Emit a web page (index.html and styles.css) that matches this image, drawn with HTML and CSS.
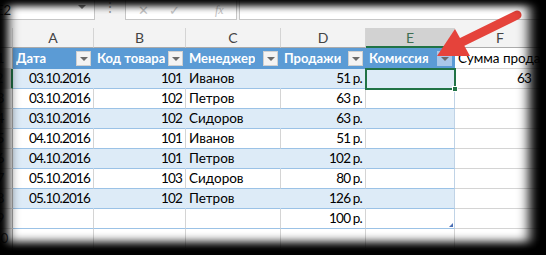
FILE: index.html
```html
<!DOCTYPE html>
<html lang="ru">
<head>
<meta charset="utf-8">
<title>Excel</title>
<link rel="stylesheet" href="styles.css">
</head>
<body>
<div class="app">
  <div class="fbar">
    <div class="namebox"><span class="nb-text">E2</span><span class="nb-arrow"></span></div>
    <div class="fb-dots">⋮</div>
    <div class="fb-buttons">
      <span class="fb-icon fb-x">✕</span>
      <span class="fb-icon fb-check">✓</span>
      <span class="fb-icon fb-fx">fx</span>
    </div>
    <div class="fb-input"></div>
  </div>
  <div class="strip"></div>
  <div class="sheet">
    <div class="row colhdr">
      <div class="cell rh"></div>
      <div class="cell ch">A</div>
      <div class="cell ch">B</div>
      <div class="cell ch">C</div>
      <div class="cell ch">D</div>
      <div class="cell ch ch-sel">E</div>
      <div class="cell ch">F</div>
    </div>
    <div class="row thead">
      <div class="cell rh"><span class="rn">1</span></div>
      <div class="cell th"><span class="th-text">Дата</span><span class="flt"></span></div>
      <div class="cell th"><span class="th-text">Код товара</span><span class="flt"></span></div>
      <div class="cell th"><span class="th-text">Менеджер</span><span class="flt"></span></div>
      <div class="cell th"><span class="th-text">Продажи</span><span class="flt"></span></div>
      <div class="cell th"><span class="th-text">Комиссия</span><span class="flt flt-on"></span></div>
      <div class="cell">Сумма продаж</div>
    </div>
    <div class="row band">
      <div class="cell rh rh-sel"><span class="rn">2</span></div>
      <div class="cell t r num">03.10.2016</div>
      <div class="cell t r num">101</div>
      <div class="cell t">Иванов</div>
      <div class="cell t r num">51 р.</div>
      <div class="cell t tlast sel"><span class="handle"></span></div>
      <div class="cell r num f-val">63</div>
    </div>
    <div class="row">
      <div class="cell rh"><span class="rn">3</span></div>
      <div class="cell t r num">03.10.2016</div>
      <div class="cell t r num">102</div>
      <div class="cell t">Петров</div>
      <div class="cell t r num">63 р.</div>
      <div class="cell t tlast"></div>
      <div class="cell"></div>
    </div>
    <div class="row band">
      <div class="cell rh"><span class="rn">4</span></div>
      <div class="cell t r num">03.10.2016</div>
      <div class="cell t r num">102</div>
      <div class="cell t">Сидоров</div>
      <div class="cell t r num">63 р.</div>
      <div class="cell t tlast"></div>
      <div class="cell"></div>
    </div>
    <div class="row">
      <div class="cell rh"><span class="rn">5</span></div>
      <div class="cell t r num">04.10.2016</div>
      <div class="cell t r num">101</div>
      <div class="cell t">Иванов</div>
      <div class="cell t r num">51 р.</div>
      <div class="cell t tlast"></div>
      <div class="cell"></div>
    </div>
    <div class="row band">
      <div class="cell rh"><span class="rn">6</span></div>
      <div class="cell t r num">04.10.2016</div>
      <div class="cell t r num">101</div>
      <div class="cell t">Петров</div>
      <div class="cell t r num">102 р.</div>
      <div class="cell t tlast"></div>
      <div class="cell"></div>
    </div>
    <div class="row">
      <div class="cell rh"><span class="rn">7</span></div>
      <div class="cell t r num">05.10.2016</div>
      <div class="cell t r num">103</div>
      <div class="cell t">Сидоров</div>
      <div class="cell t r num">80 р.</div>
      <div class="cell t tlast"></div>
      <div class="cell"></div>
    </div>
    <div class="row band">
      <div class="cell rh"><span class="rn">8</span></div>
      <div class="cell t r num">05.10.2016</div>
      <div class="cell t r num">102</div>
      <div class="cell t">Петров</div>
      <div class="cell t r num">126 р.</div>
      <div class="cell t tlast"></div>
      <div class="cell"></div>
    </div>
    <div class="row">
      <div class="cell rh"><span class="rn">9</span></div>
      <div class="cell t r"></div>
      <div class="cell t r"></div>
      <div class="cell t"></div>
      <div class="cell t r num">100 р.</div>
      <div class="cell t tlast tend"><span class="resize"></span></div>
      <div class="cell"></div>
    </div>
    <div class="row">
      <div class="cell rh"><span class="rn">10</span></div>
      <div class="cell"></div>
      <div class="cell"></div>
      <div class="cell"></div>
      <div class="cell"></div>
      <div class="cell"></div>
      <div class="cell"></div>
    </div>
    <div class="row">
      <div class="cell rh"><span class="rn">11</span></div>
      <div class="cell"></div>
      <div class="cell"></div>
      <div class="cell"></div>
      <div class="cell"></div>
      <div class="cell"></div>
      <div class="cell"></div>
    </div>
  </div>
  <svg class="arrow" width="546" height="255" viewBox="0 0 546 255">
    <line x1="517" y1="15" x2="460" y2="43" stroke="#e5433b" stroke-width="9" stroke-linecap="round"/>
    <polygon points="437,56 455,29 470,56" fill="#e5433b"/>
  </svg>
  <div class="vignette"></div>
</div>
</body>
</html>
```
FILE: styles.css
```css
* { box-sizing: border-box; }
html, body { margin: 0; padding: 0; background: #000; }
body { width: 546px; height: 255px; overflow: hidden; }

.app {
  position: relative;
  width: 546px;
  height: 255px;
  overflow: hidden;
  background: #f3f3f3;
  font-family: "Lato", "Carlito", "Liberation Sans", sans-serif;
  font-size: 13.5px;
  color: #000;
}

/* formula bar */
.fbar {
  display: flex;
  height: 20px;
  background: #f3f3f3;
}
.namebox {
  width: 95px;
  background: #fff;
  border-right: 1px solid #c6c6c6;
  border-bottom: 1px solid #c6c6c6;
  display: flex;
  align-items: center;
  justify-content: space-between;
  padding: 0 8px 0 0;
  overflow: hidden;
}
.nb-text { margin-left: -4px; font-size: 13px; color: #222; }
.nb-arrow {
  width: 0; height: 0;
  border-left: 4px solid transparent;
  border-right: 4px solid transparent;
  border-top: 4px solid #777;
  margin-top: -6px;
}
.fb-dots {
  width: 30px;
  text-align: center;
  color: #9a9a9a;
  line-height: 14px;
}
.fb-buttons {
  width: 112px;
  background: #fff;
  border-left: 1px solid #c6c6c6;
  border-right: 1px solid #c6c6c6;
  border-bottom: 1px solid #c6c6c6;
  display: flex;
  align-items: center;
  padding-left: 12px;
  gap: 20px;
}
.fb-icon { color: #c4c4c4; font-size: 13px; line-height: 12px; }
.fb-fx { font-family: "Liberation Serif", serif; font-style: italic; font-size: 12px; margin-left: 15px; }
.fb-input {
  flex: 1;
  margin-left: 2px;
  background: #fff;
  border-left: 1px solid #c6c6c6;
  border-bottom: 1px solid #c6c6c6;
}
.strip { height: 8px; background: #f3f3f3; }

/* sheet */
.sheet { background: #fff; }
.row {
  display: grid;
  grid-template-columns: 13px 81px 92px 95px 85px 89px 91px;
  height: 20px;
}
.row.thead { height: 21px; }
.cell {
  border-right: 1px solid #d4d4d4;
  border-bottom: 1px solid #d4d4d4;
  padding: 0 3px;
  line-height: 19px;
  white-space: nowrap;
  overflow: hidden;
  position: relative;
}
.thead .cell { line-height: 20px; }
.r { text-align: right; }
.num { letter-spacing: -0.8px; }

.rh {
  background: #f3f3f3;
  border-right-color: #ababab;
  display: flex;
  justify-content: flex-end;
  padding: 0;
  color: #444;
  overflow: hidden;
}
.rn { flex: none; width: 23px; text-align: center; }
.rh-sel { background: #d2d2d2; border-right: 2px solid #217346; }

.colhdr .cell {
  background: #f3f3f3;
  border-bottom-color: #ababab;
  border-right-color: #d4d4d4;
  text-align: center;
  color: #444;
  font-size: 14px;
}
.colhdr .ch-sel {
  background: #d2d2d2;
  border-bottom: 2px solid #217346;
  color: #3e6e52;
}

.th {
  background: #5b9bd5;
  color: #fff;
  font-weight: 700;
  font-size: 13px;
  border-right-color: #5b9bd5;
  border-bottom-color: #5b9bd5;
  display: flex;
  align-items: center;
  justify-content: space-between;
  padding: 0 2px 0 3px;
}
.th-text { overflow: hidden; }
.flt {
  flex: none;
  width: 15px;
  height: 15px;
  background: #f3f3f3;
  border: 1px solid #d0d0d0;
  position: relative;
  margin-left: 2px;
}
.flt::after {
  content: "";
  position: absolute;
  left: 3px;
  top: 5px;
  border-left: 4px solid transparent;
  border-right: 4px solid transparent;
  border-top: 4px solid #6a6a6a;
}
.flt-on { background: #a9c7e8; border-color: #a9c7e8; }

.t { border-bottom-color: #9bc2e6; }
.band .t { background: #ddebf7; border-right-color: #ddebf7; }
.band .tlast, .tlast { border-right-color: #c0d3e6; }

.sel {
  outline: 2px solid #217346;
  outline-offset: -1px;
  overflow: visible;
  z-index: 2;
}
.handle {
  position: absolute;
  right: -4px;
  bottom: -4px;
  width: 6px;
  height: 6px;
  background: #217346;
  border: 1px solid #fff;
}
.tend { overflow: visible; }
.resize {
  position: absolute;
  right: 1px;
  bottom: 1px;
  width: 0; height: 0;
  border-left: 4px solid transparent;
  border-bottom: 4px solid #4a6fb5;
}
.f-val { padding-right: 14px; }

.arrow {
  position: absolute;
  left: 0; top: 0;
  pointer-events: none;
  z-index: 5;
}
.vignette {
  position: absolute;
  inset: 0;
  pointer-events: none;
  z-index: 10;
  box-shadow:
    inset 8px 0 12px #000,
    inset 0 4px 8px #000,
    inset -17px 0 12px #000,
    inset 0 -13px 10px #000;
}
```
